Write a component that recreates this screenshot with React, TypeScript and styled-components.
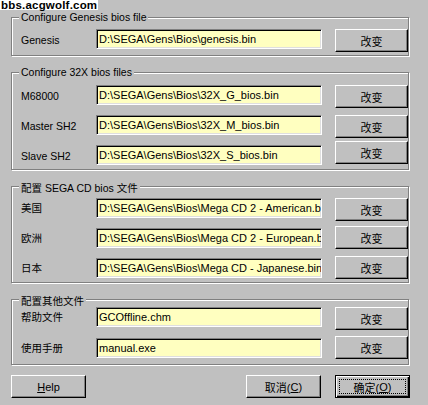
import React from "react";
import styled, { createGlobalStyle } from "styled-components";

const GlobalStyle = createGlobalStyle`
  html, body {
    margin: 0;
    padding: 0;
    background: #c0c0c0;
  }
  body {
    width: 428px;
    height: 405px;
    overflow: hidden;
    font-family: "Liberation Sans", "Noto Sans CJK SC", sans-serif;
    color: #000;
  }
`;

const FONT = `"Liberation Sans", "Noto Sans CJK SC", Arial, sans-serif`;

const Dialog = styled.div`
  position: relative;
  width: 428px;
  height: 405px;
  box-sizing: border-box;
  padding: 17px 0 0 11px;
  display: flex;
  flex-direction: column;
  background: #c0c0c0;
`;

const Watermark = styled.div`
  position: absolute;
  top: 0;
  left: 0;
  height: 10px;
  padding: 0 1px 0 1px;
  background: #fff;
  color: #000;
  font-family: ${FONT};
  font-weight: bold;
  font-size: 11.5px;
  letter-spacing: 0.2px;
  line-height: 10px;
  white-space: nowrap;
  z-index: 2;
`;

const Group = styled.section<{ $top: number; $pt: number; $pb: number; $gap: number }>`
  position: relative;
  width: 398px;
  box-sizing: border-box;
  margin-top: ${(p) => p.$top}px;
  border: 1px solid #808080;
  box-shadow: 1px 1px 0 #fff, inset 1px 1px 0 #fff;
  padding: ${(p) => p.$pt}px 0 ${(p) => p.$pb}px 9px;
  display: flex;
  flex-direction: column;
  gap: ${(p) => p.$gap}px;
`;

const Title = styled.span`
  position: absolute;
  top: -7px;
  left: 7px;
  padding: 0 2px;
  line-height: 13px;
  height: 13px;
  background: #c0c0c0;
  font: 10.5px ${FONT};
  white-space: nowrap;
`;

const Row = styled.div`
  display: flex;
  align-items: flex-start;
  height: 20px;
`;

const Label = styled.span<{ $cjk: boolean }>`
  flex: none;
  width: 75px;
  box-sizing: border-box;
  padding-top: ${(p) => (p.$cjk ? 0 : 1)}px;
  font: 10.5px ${FONT};
  line-height: 20px;
  white-space: nowrap;
`;

const Field = styled.input`
  flex: none;
  width: 226px;
  height: 20px;
  box-sizing: border-box;
  margin: 0;
  border: 1px solid;
  border-color: #808080 #fff #fff #808080;
  box-shadow: inset 1px 1px 0 #000, inset -1px -1px 0 #dfdfdf;
  background: #ffffc0;
  padding: 0 0 0 2px;
  font: 11px ${FONT};
  color: #000;
  outline: none;
`;

const Button = styled.button<{ $lift?: number; $w?: number; $ml?: number }>`
  flex: none;
  width: ${(p) => p.$w ?? 73}px;
  height: 23px;
  box-sizing: border-box;
  margin: ${(p) => -(p.$lift ?? 0)}px 0 0 ${(p) => p.$ml ?? 0}px;
  padding: 0;
  background: #c0c0c0;
  border: 1px solid;
  border-color: #fff #000 #000 #fff;
  box-shadow: inset -1px -1px 0 #808080;
  font: 11px ${FONT};
  color: #000;
  display: flex;
  align-items: center;
  justify-content: center;
  cursor: default;
`;

const DefaultButton = styled(Button)`
  border: 1px solid #000;
  box-shadow: inset 1px 1px 0 #fff, inset -1px -1px 0 #000, inset -2px -2px 0 #808080;
  padding: 3px;
`;

const FocusRing = styled.span`
  flex: 1;
  align-self: stretch;
  border: 1px dotted #000;
  display: flex;
  align-items: center;
  justify-content: center;
`;

const Key = styled.span`
  text-decoration: underline;
`;

const ButtonBar = styled.div`
  width: 399px;
  margin-top: 10px;
  display: flex;
  justify-content: space-between;
`;

const RightButtons = styled.div`
  display: flex;
  gap: 14px;
`;

type RowData = [string, string, number];
type GroupData = { title: string; top: number; pt: number; pb: number; gap: number; rows: RowData[] };

const B = "D:\\SEGA\\Gens\\Bios\\";

const groups: GroupData[] = [
  {
    title: "Configure Genesis bios file",
    top: 0,
    pt: 11,
    pb: 6,
    gap: 10,
    rows: [["Genesis", B + "genesis.bin", 0]],
  },
  {
    title: "Configure 32X bios files",
    top: 16,
    pt: 12,
    pb: 4,
    gap: 10,
    rows: [
      ["M68000", B + "32X_G_bios.bin", 0],
      ["Master SH2", B + "32X_M_bios.bin", 0],
      ["Slave SH2", B + "32X_S_bios.bin", 4],
    ],
  },
  {
    title: "配置 SEGA CD bios 文件",
    top: 16,
    pt: 11,
    pb: 4,
    gap: 10,
    rows: [
      ["美国", B + "Mega CD 2 - American.bin", 0],
      ["欧洲", B + "Mega CD 2 - European.bin", 2],
      ["日本", B + "Mega CD - Japanese.bin", 2],
    ],
  },
  {
    title: "配置其他文件",
    top: 16,
    pt: 7,
    pb: 6,
    gap: 11,
    rows: [
      ["帮助文件", "GCOffline.chm", 0],
      ["使用手册", "manual.exe", 2],
    ],
  },
];

const isCjk = (s: string) => /[^\x00-\x7f]/.test(s);

export default function App() {
  return (
    <>
      <GlobalStyle />
      <Dialog>
        <Watermark>bbs.acgwolf.com</Watermark>
        {groups.map((g) => (
          <Group key={g.title} $top={g.top} $pt={g.pt} $pb={g.pb} $gap={g.gap}>
            <Title>{g.title}</Title>
            {g.rows.map(([label, value, lift]) => (
              <Row key={label}>
                <Label $cjk={isCjk(label)}>{label}</Label>
                <Field readOnly defaultValue={value} />
                <Button $ml={13} $lift={lift}>改变</Button>
              </Row>
            ))}
          </Group>
        ))}
        <ButtonBar>
          <Button $w={75}>
            <Key>H</Key>elp
          </Button>
          <RightButtons>
            <Button $w={75}>
              取消(<Key>C</Key>)
            </Button>
            <DefaultButton $w={75}>
              <FocusRing>
                确定(<Key>O</Key>)
              </FocusRing>
            </DefaultButton>
          </RightButtons>
        </ButtonBar>
      </Dialog>
    </>
  );
}
